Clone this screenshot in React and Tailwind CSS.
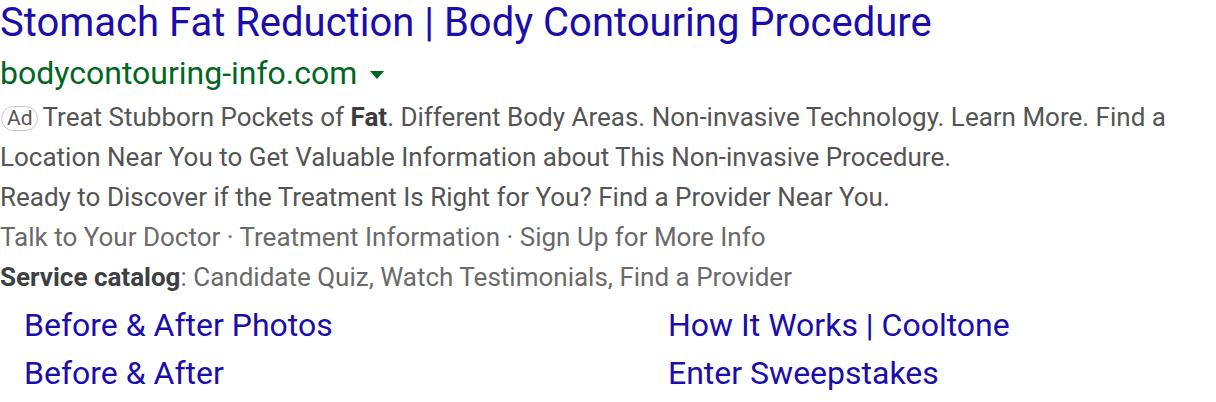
export default function App() {
  return (
    <div className="w-[1216px] h-[402px] bg-white overflow-hidden" style={{ fontFamily: "Roboto, Arial, sans-serif" }}>
      <div className="text-[40px] leading-[46px] text-[#1a0dab] whitespace-nowrap">
        Stomach Fat Reduction | Body Contouring Procedure
      </div>
      <div className="flex items-center mt-[2px] text-[32px] leading-[50px] text-[#006621]">
        <span>bodycontouring-info.com</span>
        <svg width="14" height="8" viewBox="0 0 14 8" className="ml-[13px] mt-[4px]">
          <path d="M0 0 L14 0 L7 8 Z" fill="#006621" />
        </svg>
      </div>
      <div className="text-[26px] leading-[40px] text-[#545454] mt-[-1px]">
        <span className="inline-block box-border border border-[#c8c8c8] rounded-full h-[25px] pl-[5px] pr-[4px] text-[21px] leading-[23px] mr-[5px] ml-[1px] align-[1px] text-[#545454]">Ad</span>
        Treat Stubborn Pockets of <b className="text-[#3c3c3c]">Fat</b>. Different Body Areas. Non-invasive Technology. Learn More. Find a Location Near You to Get Valuable Information about This Non-invasive Procedure.
      </div>
      <div className="text-[26px] leading-[40px] text-[#545454]">
        Ready to Discover if the Treatment Is Right for You? Find a Provider Near You.
      </div>
      <div className="text-[26px] leading-[40px] text-[#6a6a6a]">
        Talk to Your Doctor · Treatment Information · Sign Up for More Info
      </div>
      <div className="text-[26px] leading-[40px] text-[#6a6a6a]">
        <b className="text-[#3c4043]">Service catalog</b>: Candidate Quiz, Watch Testimonials, Find a Provider
      </div>
      <div className="grid grid-cols-[644px_1fr] mt-[4px] pl-[24px] text-[32px] leading-[48px] text-[#1a0dab]">
        <div>Before &amp; After Photos</div>
        <div>How It Works | Cooltone</div>
        <div>Before &amp; After</div>
        <div>Enter Sweepstakes</div>
      </div>
    </div>
  );
}
